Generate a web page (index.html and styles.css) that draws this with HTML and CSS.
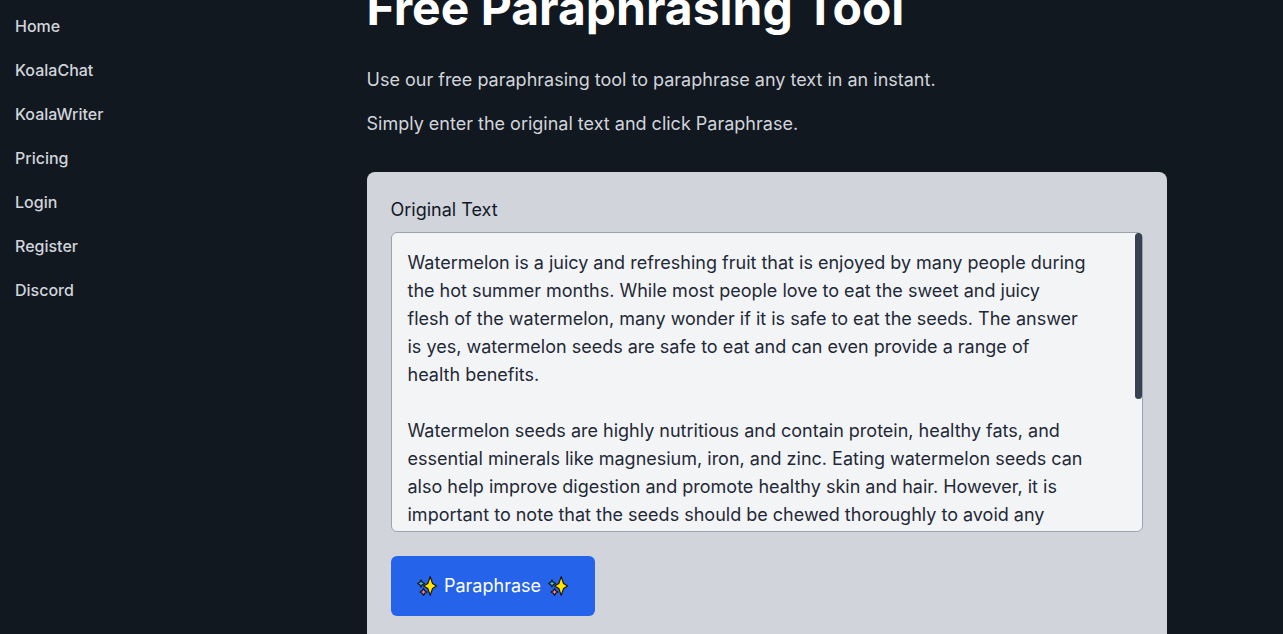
FILE: index.html
```html
<!DOCTYPE html>
<html lang="en">
<head>
    <meta charset="UTF-8">
    <title>Free Paraphrasing Tool</title>
    <link rel="stylesheet" href="styles.css">
</head>
<body>
<div class="page">
    <ul class="side">
        <li><a href="#">Home</a></li>
        <li><a href="#">KoalaChat</a></li>
        <li><a href="#">KoalaWriter</a></li>
        <li><a href="#">Pricing</a></li>
        <li><a href="#">Login</a></li>
        <li><a href="#">Register</a></li>
        <li><a href="#">Discord</a></li>
    </ul>
    <div class="main">
        <h1>Free Paraphrasing Tool</h1>
        <p>Use our free paraphrasing tool to paraphrase any text in an instant.</p>
        <p>Simply enter the original text and click Paraphrase.</p>
        <form class="card">
            <label class="lbl" for="original">Original Text</label>
            <div class="txtwrap">
                <textarea class="txt" id="original" spellcheck="false">Watermelon is a juicy and refreshing fruit that is enjoyed by many people during
the hot summer months. While most people love to eat the sweet and juicy
flesh of the watermelon, many wonder if it is safe to eat the seeds. The answer
is yes, watermelon seeds are safe to eat and can even provide a range of
health benefits.

Watermelon seeds are highly nutritious and contain protein, healthy fats, and
essential minerals like magnesium, iron, and zinc. Eating watermelon seeds can
also help improve digestion and promote healthy skin and hair. However, it is
important to note that the seeds should be chewed thoroughly to avoid any
digestive discomfort.</textarea>
                <div class="thumb"></div>
            </div>
            <button class="btn" type="button">
                <svg class="spark" viewBox="0 0 20 20"><use href="#sparkles"/></svg>
                <span class="btntext">Paraphrase</span>
                <svg class="spark" viewBox="0 0 20 20"><use href="#sparkles"/></svg>
            </button>
        </form>
    </div>
</div>
<svg class="defs" width="0" height="0">
    <defs>
        <g id="sparkles" stroke="#1a1408" stroke-width="1.2" stroke-linejoin="round">
            <path fill="#ee7fb0" d="M6.5 12.4 L7.7 14.8 L10 16 L7.7 17.2 L6.5 19.6 L5.3 17.2 L3 16 L5.3 14.8 Z"/>
            <path fill="#35c6e8" d="M4 4 L5.2 6.3 L7.6 7.5 L5.2 8.7 L4 11 L2.8 8.7 L0.6 7.5 L2.8 6.3 Z"/>
            <path fill="#ffe600" d="M13.2 0.6 L15.6 7.6 L19.6 10 L15.6 12.4 L13.2 19.4 L10.8 12.4 L6.6 10 L10.8 7.6 Z"/>
        </g>
    </defs>
</svg>
</body>
</html>
```
FILE: styles.css
```css
*{
    margin:0;
    padding:0;
    box-sizing:border-box;
    list-style:none;
}
html,body{
    height:100%;
    overflow:hidden;
}
body{
    background:#111820;
    font-family:Inter,"Liberation Sans",sans-serif;
}
.page{
    display:flex;
}
.side{
    flex:0 0 366.5px;
    padding:4px 15px 0;
}
.side li{
    height:44px;
    line-height:44px;
}
.side a{
    color:#d1d5db;
    font-size:16px;
    font-weight:500;
    text-decoration:none;
}
.main{
    flex:0 0 800px;
    margin-top:-22px;
}
h1{
    color:#fff;
    font-size:48px;
    font-weight:700;
    line-height:60px;
    margin-bottom:28px;
}
.main p{
    color:#d1d5db;
    font-size:18px;
    line-height:28px;
    margin-bottom:16px;
}
.card{
    background:#d1d5db;
    border-radius:8px;
    margin-top:34px;
    padding:24px;
    height:600px;
}
.lbl{
    display:block;
    color:#111827;
    font-size:18px;
    line-height:28px;
    margin-bottom:8px;
}
.txtwrap{
    position:relative;
}
.txt{
    display:block;
    width:100%;
    height:300px;
    padding:16px;
    resize:none;
    white-space:pre;
    overflow:hidden;
    background:#f3f4f6;
    border:1px solid #9ca3af;
    border-radius:6px;
    color:#1f2937;
    font-family:inherit;
    font-size:18px;
    line-height:28px;
}
.thumb{
    position:absolute;
    top:1px;
    right:1px;
    width:7px;
    height:166px;
    background:#374151;
    border-radius:4px;
}
.btn{
    display:flex;
    align-items:center;
    justify-content:center;
    gap:7px;
    width:204px;
    height:60px;
    margin-top:24px;
    background:#2563eb;
    border:0;
    border-radius:6px;
    color:#fff;
    font-family:inherit;
    font-size:18px;
}
.btntext{
    padding-bottom:2px;
}
.spark{
    width:20px;
    height:20px;
}
.defs{
    display:none;
}
```
